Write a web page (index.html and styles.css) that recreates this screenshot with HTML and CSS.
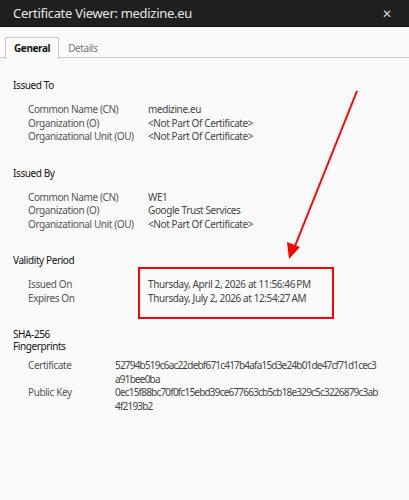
FILE: index.html
```html
<!DOCTYPE html>
<html lang="en">
<head>
    <meta charset="UTF-8">
    <meta name="viewport" content="width=device-width, initial-scale=1.0">
    <title>Certificate Viewer</title>
    <link rel="stylesheet" href="styles.css">
</head>
<body>

<header class="titlebar">
    <span class="title">Certificate Viewer: medizine.eu</span>
    <span class="close">&#x2715;</span>
</header>

<nav class="tabs">
    <a class="tab active">General</a>
    <a class="tab">Details</a>
</nav>

<div class="content">
    <section class="group">
        <h3>Issued To</h3>
        <div class="rows">
            <span class="label">Common Name (CN)</span><span class="value">medizine.eu</span>
            <span class="label">Organization (O)</span><span class="value">&lt;Not Part Of Certificate&gt;</span>
            <span class="label">Organizational Unit (OU)</span><span class="value">&lt;Not Part Of Certificate&gt;</span>
        </div>
    </section>

    <section class="group">
        <h3>Issued By</h3>
        <div class="rows">
            <span class="label">Common Name (CN)</span><span class="value">WE1</span>
            <span class="label">Organization (O)</span><span class="value">Google Trust Services</span>
            <span class="label">Organizational Unit (OU)</span><span class="value">&lt;Not Part Of Certificate&gt;</span>
        </div>
    </section>

    <section class="group">
        <h3>Validity Period</h3>
        <div class="rows">
            <span class="label">Issued On</span><span class="value">Thursday, April 2, 2026 at 11:56:46&#8239;PM</span>
            <span class="label">Expires On</span><span class="value">Thursday, July 2, 2026 at 12:54:27&#8239;AM</span>
        </div>
    </section>

    <section class="group fp-group">
        <h3>SHA-256<br>Fingerprints</h3>
        <div class="rows fingerprints">
            <span class="label">Certificate</span><span class="value">52794b519c6ac22debf671c417b4afa15d3e24b01de47cf71d1cec3a91bee0ba</span>
            <span class="label">Public Key</span><span class="value">0ec15f88bc70f0fc15ebd39ce677663cb5cb18e329c5c3226879c3ab4f2193b2</span>
        </div>
    </section>
</div>

<!-- annotation drawn over the screenshot -->
<div class="highlight"></div>
<svg class="arrow" width="409" height="500" viewBox="0 0 409 500">
    <line x1="357" y1="91" x2="295" y2="246" stroke="#ff0000" stroke-width="2"/>
    <polygon points="289,259 287,242 300,247" fill="#ff0000"/>
</svg>

</body>
</html>
```

FILE: styles.css
```css
body {
    font-family: "Noto Sans", "Open Sans", sans-serif;
    font-size: 10px;
    letter-spacing: -0.4px;
    background-color: #fafafa;
    color: #444;
    margin: 0;
    padding: 0;
    position: relative;
    height: 500px;
    overflow: hidden;
}
.titlebar {
    background-color: #1f1f1f;
    height: 26px;
    display: flex;
    justify-content: space-between;
    align-items: center;
    padding: 0 17px 0 13px;
    border-bottom: 1px solid #111;
}
.title {
    color: #e6e6e6;
    font-size: 13px;
    letter-spacing: -0.3px;
}
.close {
    color: #cfcfcf;
    font-size: 12px;
}
.tabs {
    display: flex;
    margin-top: 10px;
    padding-left: 5px;
    border-bottom: 1px solid #c9c9c9;
    height: 20px;
}
.tab {
    padding: 0 8px 0 8px;
    line-height: 20px;
    color: #777;
    border: 1px solid transparent;
    border-bottom: none;
}
.tab.active {
    color: #111;
    font-weight: bold;
    background-color: #fafafa;
    border-color: #c9c9c9;
    margin-bottom: -1px;
    height: 21px;
}
.content {
    padding: 22px 13px 0 13px;
}
.group {
    margin-bottom: 24px;
}
.group h3 {
    font-size: 10px;
    font-weight: normal;
    color: #111;
    margin: 0 0 12px 0;
    line-height: 11px;
}
.fp-group h3 {
    line-height: 12px;
    margin-top: -1px;
    margin-bottom: 7px;
}
.rows {
    display: grid;
    grid-template-columns: 120px 1fr;
    padding-left: 15px;
    line-height: 13.5px;
    color: #555;
}
.rows .value {
    color: #444;
}
.fingerprints {
    grid-template-columns: 87px 1fr;
    padding-right: 16px;
}
.fingerprints .value {
    word-break: break-all;
    letter-spacing: -0.8px;
}
.highlight {
    position: absolute;
    left: 138px;
    top: 267px;
    width: 192px;
    height: 48px;
    border: 2px solid #ff0000;
}
.arrow {
    position: absolute;
    left: 0;
    top: 0;
}
```
